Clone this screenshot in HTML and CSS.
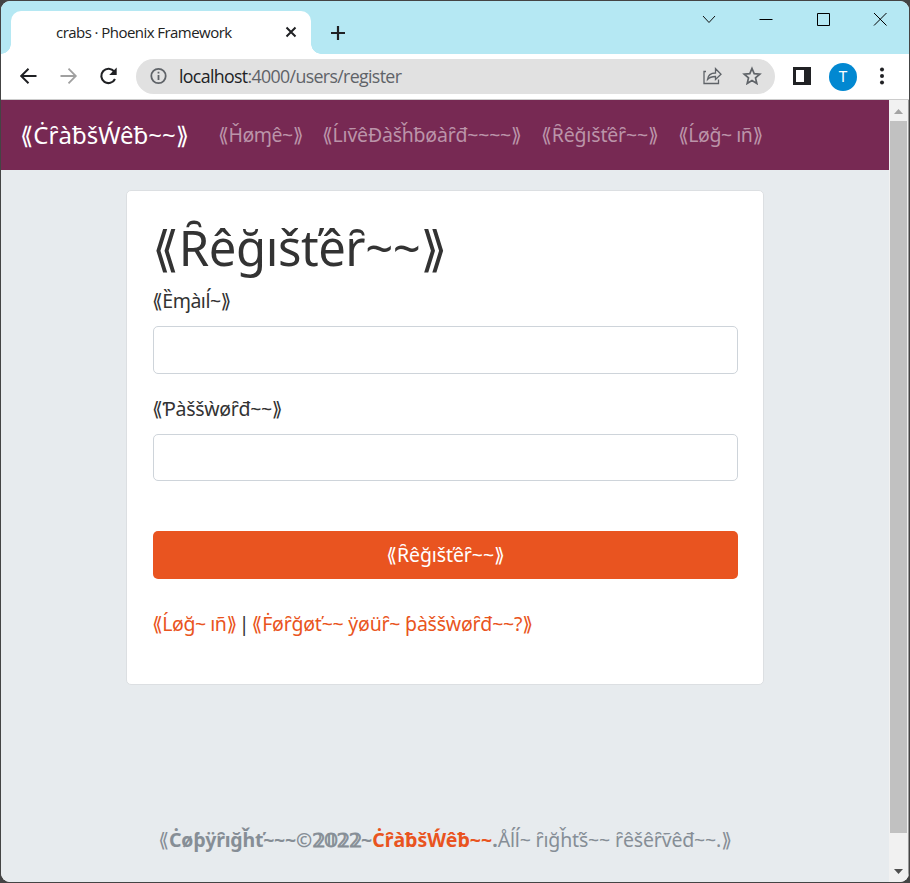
FILE: index.html
```html
<!DOCTYPE html>
<html lang="en">
<head>
<meta charset="utf-8">
<title>crabs · Phoenix Framework</title>
<link rel="stylesheet" href="styles.css">
</head>
<body>
<div class="window">
  <header class="tabstrip">
    <div class="tab"><span class="tab-title">crabs · Phoenix Framework</span>
      <svg class="tab-close" width="12" height="12" viewBox="0 0 12 12"><path d="M1.500 1.500l9 9M10.500 1.500l-9 9" stroke="#202124" stroke-width="2"/></svg>
    </div>
    <svg class="new-tab" width="16" height="16" viewBox="0 0 16 16"><path d="M8 1v14M1 8h14" stroke="#202124" stroke-width="2.2"/></svg>
    <div class="controls">
      <svg width="16" height="16" viewBox="0 0 16 16"><path d="M2 5l6 6.500 6-6.500" fill="none" stroke="#111"/></svg>
      <svg width="16" height="16" viewBox="0 0 16 16"><path d="M1.500 8.500h13" stroke="#000"/></svg>
      <svg width="16" height="16" viewBox="0 0 16 16"><path d="M2.500 2.500h12v12h-12z" fill="none" stroke="#000"/></svg>
      <svg width="16" height="16" viewBox="0 0 16 16"><path d="M2 2l12.500 12.500M14.500 2L2 14.500" stroke="#000"/></svg>
    </div>
  </header>
  <div class="toolbar">
    <svg class="back" width="20" height="20" viewBox="0 0 20 20"><path d="M18.500 10H3.500M10.500 2.700L3.200 10l7.300 7.300" fill="none" stroke="#202124" stroke-width="2"/></svg>
    <svg class="forward" width="20" height="20" viewBox="0 0 20 20"><path d="M2.500 10h15M10.500 2.700l7.300 7.300-7.300 7.300" fill="none" stroke="#a0a0a0" stroke-width="1.800"/></svg>
    <svg class="reload" width="20" height="20" viewBox="0 0 20 20"><path d="M17 13a7.200 7.200 0 1 1-.8-7.500" fill="none" stroke="#202124" stroke-width="2.100"/><path d="M18.700 1.500v7.500h-7.500z" fill="#202124"/></svg>
    <div class="address">
      <svg width="18" height="18" viewBox="0 0 18 18"><circle cx="9.500" cy="9" r="7.200" fill="none" stroke="#5f6368" stroke-width="1.800"/><path d="M9.500 8v5M9.500 4.800v1.800" stroke="#5f6368" stroke-width="1.800"/></svg>
      <span class="url"><b>localhost</b>:4000/users/register</span>
      <svg class="share" width="20" height="20" viewBox="0 0 20 20"><path d="M4 5.500H2v12h14.500v-4" fill="none" stroke="#5f6368" stroke-width="1.300"/><path d="M5.500 13.500c.5-4 3-6.500 8-6.500V2.700l5.500 5.600-5.500 5.200V10.500c-3.700 0-6 .8-8 3z" fill="none" stroke="#5f6368" stroke-width="1.300"/></svg>
      <svg class="star" width="20" height="20" viewBox="0 0 20 20"><path d="M10 2.500l2.200 5.200 5.600.5-4.300 3.700 1.300 5.500L10 14.500l-4.800 2.900 1.300-5.500-4.300-3.700 5.600-.5z" fill="none" stroke="#5f6368" stroke-width="1.700"/></svg>
    </div>
    <svg class="panel" width="18" height="18" viewBox="0 0 18 18"><path fill="#202124" d="M0 0h18v18H0z"/><path fill="#fff" d="M3 3h8v12H3z"/></svg>
    <span class="avatar">T</span>
    <svg class="dots" width="6" height="18" viewBox="0 0 6 18"><circle cx="3" cy="2.500" r="2"/><circle cx="3" cy="9" r="2"/><circle cx="3" cy="15.500" r="2"/></svg>
  </div>
  <div class="viewport">
    <div class="page">
      <nav class="navbar">
        <a class="brand">⟪ĊȓàƀšẂêƀ~~⟫</a>
        <a class="home">⟪Ȟøɱê~⟫</a>
        <a class="live">⟪ĹıṽêĐàšȟƀøàȓđ~~~~⟫</a>
        <a class="reg">⟪Ȓêğıšťêȓ~~⟫</a>
        <a class="login">⟪Ĺøğ~ ıñ⟫</a>
      </nav>
      <main class="card">
        <h1>⟪Ȓêğıšťêȓ~~⟫</h1>
        <label for="email" class="email">⟪Ȅɱàıĺ~⟫</label>
        <input id="email" type="email">
        <label for="password" class="pass">⟪Ƥàššẁøȓđ~~⟫</label>
        <input id="password" type="password">
        <button>⟪Ȓêğıšťêȓ~~⟫</button>
        <p class="links"><a class="l1">⟪Ĺøğ~ ıñ⟫</a><span class="bar">|</span><a class="l2">⟪Ḟøȓğøť~~ ÿøüȓ~ ƥàššẁøȓđ~~?⟫</a></p>
      </main>
      <footer><span class="f0">⟪</span><b class="f1">Ċøƥÿȓığȟť~~~©</b><b class="year">𝟚𝟘𝟚𝟚</b><b class="f2">~</b><b class="f3">ĊȓàƀšẂêƀ~~</b><b class="f4">.</b><span class="f5">Åĺĺ~ ȓığȟťš~~ ȓêšêȓṽêđ~~.⟫</span></footer>
    </div>
    <div class="scrollbar">
      <svg width="9" height="5" viewBox="0 0 9 5"><path d="M0 5l4.500-5L9 5z" fill="#a3a3a3"/></svg>
      <i></i>
      <svg width="9" height="5" viewBox="0 0 9 5"><path d="M0 0l4.500 5L9 0z" fill="#505050"/></svg>
    </div>
  </div>
</div>
</body>
</html>
```
FILE: styles.css
```css
* { box-sizing: border-box; }
html { background: #444; }
body { margin: 0; height: 883px; padding: 1px 1px 1px 1px; overflow: hidden; font: 19.500px/30px "Noto Sans", "DejaVu Sans", sans-serif; color: #333; }
svg { display: block; flex: none; }
.window { height: 881px; border-radius: 9px; overflow: hidden; background: #fff; }
.tabstrip { height: 53px; background: #b5e8f3; display: flex; padding: 10px 21px 0 10px; }
.tab { position: relative; width: 300px; height: 43px; background: #fff; border-radius: 10px 10px 0 0; display: flex; align-items: center; justify-content: space-between; padding: 0 14px 0 45px; }
.tab::before, .tab::after { content: ""; position: absolute; bottom: 0; width: 10px; height: 10px; }
.tab::before { left: -10px; background: radial-gradient(circle at 0 0, transparent 9.500px, #fff 10px); }
.tab::after { right: -10px; background: radial-gradient(circle at 100% 0, transparent 9.500px, #fff 10px); }
.tab-close { margin-bottom: 1px; }
.tab-title { font: 15px/20px "Open Sans", sans-serif; letter-spacing: -.55px; color: #222; white-space: nowrap; margin-bottom: 2px; }
.new-tab { margin: 14px 0 0 19px; }
.controls { margin-left: auto; display: flex; gap: 41px; }
.toolbar { height: 46px; border-bottom: 1px solid #ccc; display: flex; align-items: center; padding: 0 23px 1px 17px; }
.forward, .reload { margin-left: 20px; }
.address { width: 639px; height: 35px; margin: 1px 0 0 18px; background: #e1e1e1; border-radius: 18px; padding: 0 13px 1px; display: flex; align-items: center; }
.url { margin-left: 12px; font: 17.800px/30px "Open Sans", sans-serif; letter-spacing: -.66px; color: #5f6368; }
.url b { font-weight: 400; color: #202124; }
.share { margin-left: auto; }
.star { margin-left: 20px; }
.panel { margin-left: 18px; }
.avatar { width: 28px; height: 28px; margin: 1px 0 0 18px; border-radius: 50%; background: #0288d1; color: #fff; text-align: center; font: 15px/28px Roboto, sans-serif; }
.dots { margin-left: 22px; fill: #202124; }
.viewport { height: 782px; display: flex; }
.page { flex: 1; background: #e7ebee; display: flex; flex-direction: column; align-items: center; }
.navbar { width: 100%; height: 70px; background: #772953; padding-left: 19px; display: flex; align-items: center; color: #bb94a9; white-space: nowrap; }
.navbar a { flex: none; }
.brand { width: 198px; color: #fff; font-size: 24px; }
.home { width: 104px; letter-spacing: -.45px; }
.live { width: 219px; letter-spacing: -.22px; }
.reg { width: 137px; letter-spacing: -.16px; }
.login, .l1 { letter-spacing: -.47px; }
.card { width: 638px; height: 495px; margin-top: 20px; padding: 26px 25px 0 26px; background: #fff; border: 1px solid #dcdfe2; border-radius: 5px; display: flex; flex-direction: column; }
h1 { margin: 0 0 0 -1px; height: 69px; font-size: 49px; line-height: 60px; font-weight: 400; letter-spacing: -.45px; white-space: nowrap; }
label { height: 30px; margin-left: -1px; white-space: nowrap; }
.email { letter-spacing: -.5px; }
.pass { letter-spacing: -.32px; }
input { width: 100%; height: 48px; margin: 10px 0 20px; border: 1px solid #ced4da; border-radius: 5px; background: #fff; }
#password { height: 47px; margin-bottom: 50px; }
button { height: 48px; border: 0; border-radius: 5px; background: #e95420; color: #fff; font: inherit; letter-spacing: -.1px; padding: 0; }
.links { margin: 30px 0 0 -1px; white-space: nowrap; color: #333; }
.links a, .f3 { color: #e95420; }
.bar { margin: 0 2px; }
.l2 { letter-spacing: -.22px; }
footer { margin-top: 140px; color: #868e96; white-space: nowrap; }
.f1 { letter-spacing: -.22px; }
.f5 { letter-spacing: -.16px; }
.year { font-family: "DejaVu Sans", sans-serif; letter-spacing: -1.300px; -webkit-text-stroke: .8px #868e96; }
.scrollbar { width: 20px; background: #f1f1f1; border-right: 1px solid #999; display: flex; flex-direction: column; align-items: center; padding: 9px 0 8px; }
.scrollbar i { width: 17px; height: 712px; margin: 7px 0 auto; background: #c1c1c1; }
```
